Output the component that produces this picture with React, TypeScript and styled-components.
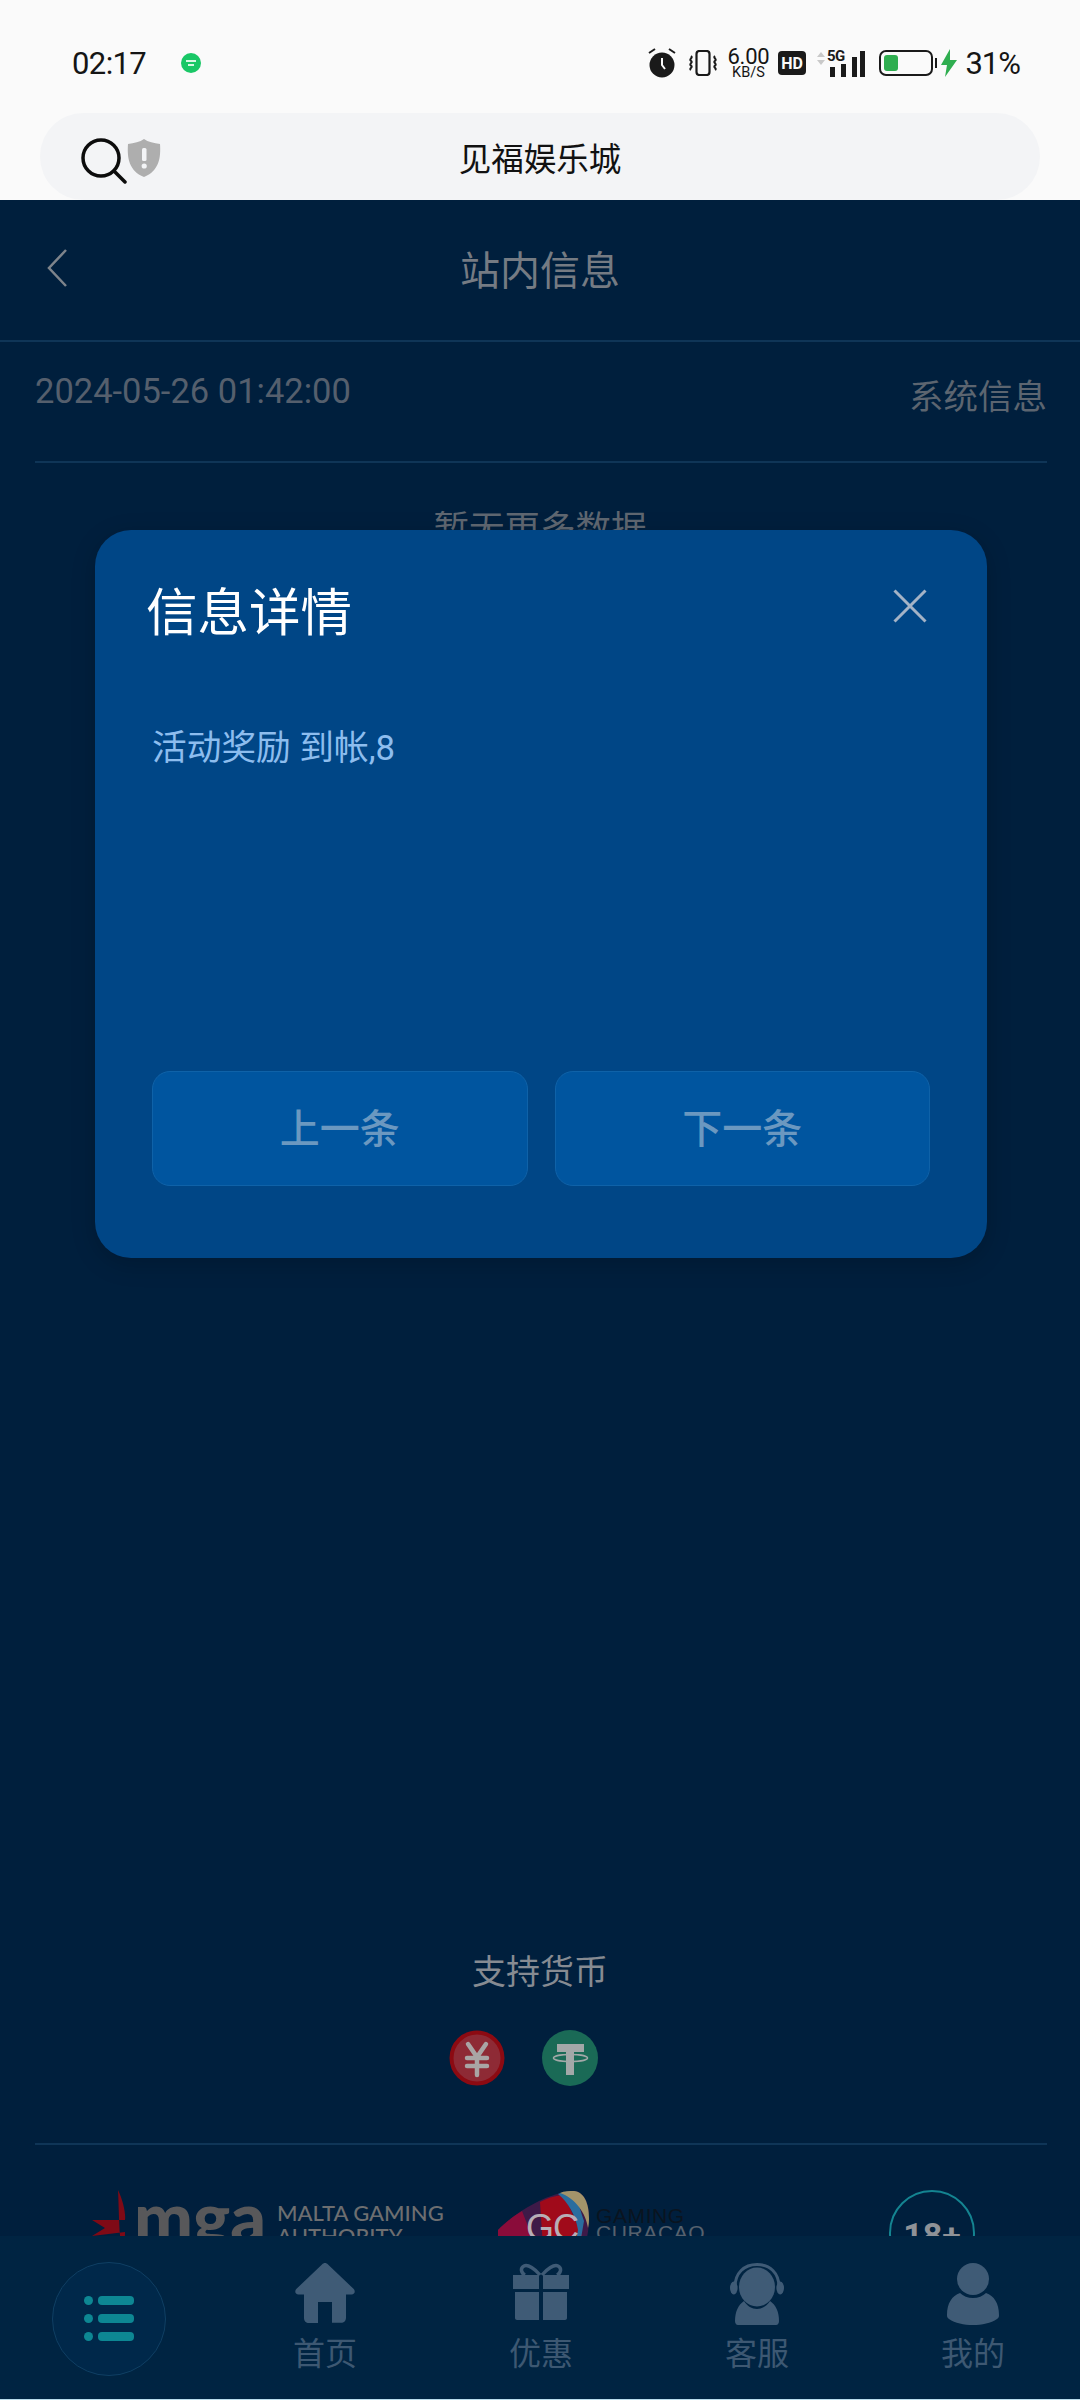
import React from "react";
import styled, { createGlobalStyle } from "styled-components";

const Global = createGlobalStyle`
  html, body { margin: 0; padding: 0; background: #001f3d; }
  * { box-sizing: border-box; }
`;

const SANS = `Roboto, "Noto Sans CJK SC", "Noto Sans", sans-serif`;

const Screen = styled.div`
  width: 1080px;
  height: 2400px;
  display: flex;
  flex-direction: column;
  overflow: hidden;
  font-family: ${SANS};
  background: #fafafa;
`;

const StatusBar = styled.div`
  height: 113px;
  flex: none;
  display: flex;
  align-items: center;
  padding: 13px 60px 0 72px;
  color: #151515;
`;
const Time = styled.span`
  font-size: 31px;
  letter-spacing: -0.6px;
  width: 108px;
`;
const NotifyDot = styled.span`
  width: 20px;
  height: 20px;
  margin-left: 1px;
  border-radius: 50%;
  background: #19c766;
  display: flex;
  flex-direction: column;
  align-items: center;
  justify-content: center;
  gap: 2px;
  &::before, &::after { content: ""; height: 2px; background: #d8f7e4; }
  &::before { width: 10px; }
  &::after { width: 6px; }
`;
const StatusRight = styled.div`
  margin-left: auto;
  display: flex;
  align-items: center;
`;
const Speed = styled.div`
  display: flex;
  flex-direction: column;
  align-items: center;
  width: 44px;
  margin: 0 8px 0 9px;
  line-height: 1;
`;
const SpeedValue = styled.span`
  font-size: 22px;
  line-height: 19px;
  letter-spacing: -0.2px;
`;
const SpeedUnit = styled.span`
  font-size: 14.5px;
  line-height: 13px;
`;
const Battery = styled.span`
  position: relative;
  width: 54px;
  height: 26px;
  margin: 0 8px 0 11px;
  border: 2px solid #1a1a1a;
  border-radius: 7px;
  padding: 3px;
  display: flex;
  &::after {
    content: "";
    position: absolute;
    right: -6px;
    top: 6px;
    width: 2px;
    height: 10px;
    background: #1a1a1a;
  }
`;
const BatteryFill = styled.span<{ $pct: number }>`
  width: ${(p) => p.$pct}%;
  background: #2fae50;
  border-radius: 3px;
`;
const Percent = styled.span`
  font-size: 31px;
  letter-spacing: -1px;
  margin-left: 8px;
`;

const UrlBar = styled.div`
  height: 87px;
  flex: none;
  margin: 0 40px;
  border-radius: 44px;
  background: #f3f4f6;
  position: relative;
  display: flex;
  align-items: center;
  justify-content: center;
`;
const UrlIcons = styled.div`
  position: absolute;
  left: 41px;
  top: 25px;
  display: flex;
  align-items: flex-start;
`;
const UrlTitle = styled.span`
  font-size: 32.500px;
  color: #111;
`;

const Main = styled.main`
  flex: 1;
  min-height: 0;
  position: relative;
  overflow: hidden;
  display: flex;
  flex-direction: column;
  background: #001f3d;
`;
const Header = styled.header`
  height: 142px;
  flex: none;
  border-bottom: 2px solid #0f3557;
  display: flex;
  align-items: center;
  justify-content: center;
  position: relative;
`;
const BackIcon = styled.svg`
  position: absolute;
  left: 46px;
  top: 48px;
`;
const PageTitle = styled.h1`
  margin: 0 0 4px;
  font-size: 40px;
  font-weight: 400;
  color: #757b83;
`;
const MessageRow = styled.div`
  height: 121px;
  flex: none;
  margin: 0 33px 0 35px;
  border-bottom: 2px solid #0f3557;
  display: flex;
  justify-content: space-between;
  align-items: flex-start;
  padding-top: 29px;
`;
const DateText = styled.span`
  font-size: 34.5px;
  line-height: 40px;
  color: #555f6d;
`;
const TypeText = styled.span`
  font-size: 34.5px;
  line-height: 44px;
  margin-top: 4px;
  color: #5c6570;
`;
const EmptyText = styled.div`
  flex: 1;
  padding-top: 46px;
  text-align: center;
  font-size: 35.5px;
  line-height: 40px;
  color: #5f6771;
`;
const CurrencySection = styled.section`
  flex: none;
  height: 196px;
  display: flex;
  flex-direction: column;
  align-items: center;
`;
const CurrencyTitle = styled.div`
  margin-top: 3px;
  font-size: 34px;
  line-height: 44px;
  color: #868b92;
`;
const CurrencyIcons = styled.div`
  margin-top: 36px;
  padding-right: 33px;
  display: flex;
  gap: 37px;
`;
const LogoRow = styled.div`
  height: 93px;
  flex: none;
  margin: 0 33px 0 35px;
  padding: 45px 0 0 57px;
  border-top: 2px solid #0f3557;
  display: grid;
  grid-template-columns: 406px 391px 86px;
  overflow: hidden;
`;
const MgaLogo = styled.div`
  display: flex;
  align-items: flex-start;
  height: 100px;
`;
const MgaWord = styled.span`
  font-family: Lato, sans-serif;
  font-weight: 900;
  font-size: 70px;
  line-height: 46px;
  letter-spacing: 0;
  margin: 3px 0 0 6px;
  color: #58585a;
`;
const MgaCaption = styled.span`
  margin: 11px 0 0 11px;
  font-family: Lato, sans-serif;
  font-weight: 500;
  font-size: 22px;
  line-height: 23px;
  color: #6d6e70;
  white-space: nowrap;
`;
const GcLogo = styled.div`
  display: flex;
  align-items: flex-start;
  height: 100px;
  position: relative;
`;
const GcMark = styled.span`
  position: absolute;
  left: 28px;
  top: 18px;
  font-family: "Liberation Sans", sans-serif;
  font-size: 36px;
  line-height: 40px;
  letter-spacing: -1px;
  color: #b7aeb6;
`;
const GcCaption = styled.div`
  margin: 17px 0 0 6px;
  display: flex;
  flex-direction: column;
  font-family: "Liberation Sans", sans-serif;
  white-space: nowrap;
`;
const GcLine = styled.span<{ $color: string }>`
  font-size: 21px;
  line-height: 17px;
  letter-spacing: 0.6px;
  color: ${(p) => p.$color};
`;
const AgeBadge = styled.div`
  width: 86px;
  height: 86px;
  flex: none;
  border: 2px solid #148491;
  border-radius: 50%;
  display: flex;
  justify-content: center;
  padding-top: 23px;
  font-size: 34px;
  line-height: 40px;
  font-weight: 700;
  color: #8f9297;
`;

const Overlay = styled.div`
  position: absolute;
  inset: 0;
  display: flex;
  justify-content: center;
  align-items: flex-start;
  padding: 330px 0 0 2px;
`;
const Modal = styled.div`
  width: 892px;
  height: 728px;
  padding: 0 57px 72px;
  border-radius: 36px;
  background: #004686;
  box-shadow: 0 6px 24px rgba(0, 0, 0, 0.18);
  display: flex;
  flex-direction: column;
`;
const ModalHead = styled.div`
  height: 120px;
  flex: none;
  margin: 0 3px 0 -6px;
  display: flex;
  align-items: flex-end;
  justify-content: space-between;
`;
const ModalTitle = styled.h2`
  margin: 0;
  font-size: 51.5px;
  line-height: 72px;
  font-weight: 400;
  color: #ffffff;
`;
const CloseIcon = styled.svg`
  align-self: flex-start;
  margin-top: 59px;
`;
const ModalBody = styled.p`
  margin: 75px 0 0;
  font-size: 34.7px;
  line-height: 46px;
  color: #8dbdee;
`;
const ModalActions = styled.div`
  margin-top: auto;
  display: flex;
  gap: 27px;
`;
const PageButton = styled.button`
  flex: 1;
  height: 115px;
  padding: 0 0 5px;
  border: 1px solid #0f62a8;
  border-radius: 18px;
  background: #00559f;
  color: #6b98c0;
  font-family: ${SANS};
  font-size: 40px;
  font-weight: 500;
`;

const Nav = styled.nav`
  height: 164px;
  flex: none;
  background: #002442;
  border-bottom: 1px solid #b9dcec;
  display: grid;
  grid-template-columns: 217px repeat(4, 216px);
`;
const MenuSlot = styled.div`
  display: flex;
  justify-content: center;
  padding-top: 26px;
`;
const MenuButton = styled.div`
  width: 114px;
  height: 114px;
  border: 1.5px solid #0f3f63;
  border-radius: 50%;
  background: #00284a;
  display: flex;
  align-items: center;
  justify-content: center;
`;
const NavItem = styled.div`
  display: flex;
  flex-direction: column;
  align-items: center;
  padding-top: 27px;
`;
const NavIconBox = styled.div`
  height: 62px;
  display: flex;
  align-items: flex-start;
  justify-content: center;
`;
const NavLabel = styled.span`
  margin-top: 9px;
  font-size: 32px;
  line-height: 40px;
  color: #3d5872;
`;

const NAV = "#3f5b76";
const TEAL = "#0d8793";

function HomeIcon() {
  return (
    <svg width="60" height="60" viewBox="0 0 60 60">
      <path
        fill={NAV}
        d="M30 0c1.2 0 2 .5 3 1.5l25.5 24.3c2.3 2.2 1.2 5.7-2 5.7H51v23.3c0 3-2 5-5 5H37V39H23v21h-9c-3 0-5-2-5-5V31.500H3.500c-3.200 0-4.300-3.500-2-5.700L27 1.500C28 .5 28.800 0 30 0z"
      />
    </svg>
  );
}
function GiftIcon() {
  return (
    <svg width="58" height="58" viewBox="0 0 58 58">
      <path fill="none" stroke={NAV} strokeWidth="3.5" d="M28 12C23 6 16 1 12 3c-4 2-3 7 1 9M30 12c5-6 12-11 16-9 4 2 3 7-1 9" />
      <path fill={NAV} d="M1 12h26v14H1zM31 12h26v14H31zM3 29h24v28H5c-1 0-2-1-2-2zM31 29h24v26c0 1-1 2-2 2H31z" />
    </svg>
  );
}
function HeadsetIcon() {
  return (
    <svg width="54" height="62" viewBox="0 0 54 62">
      <path fill="none" stroke={NAV} strokeWidth="3" d="M5 24C5 10 14 1.500 27 1.500S49 10 49 24" />
      <ellipse cx="3.800" cy="25" rx="3.800" ry="6.500" fill={NAV} />
      <ellipse cx="50.200" cy="25" rx="3.800" ry="6.500" fill={NAV} />
      <ellipse cx="27" cy="24" rx="18" ry="19.500" fill={NAV} />
      <path fill={NAV} d="M14 38c3 5 8 8 13 8s10-3 13-8c6 4 9 11 9 20 0 2-1 4-3 4H8c-2 0-3-2-3-4 0-9 3-16 9-20z" />
    </svg>
  );
}
function UserIcon() {
  return (
    <svg width="52" height="62" viewBox="0 0 52 62">
      <circle cx="26" cy="16" r="16" fill={NAV} />
      <path fill={NAV} d="M13 30c3 3 8 5 13 5s10-2 13-5c8 3 13 10 13 22 0 1 0 3-2 4-6 4-15 6-24 6S8 60 2 56c-2-1-2-3-2-4 0-12 5-19 13-22z" />
    </svg>
  );
}

export default function App() {
  return (
    <Screen>
      <Global />
      <StatusBar>
        <Time>02:17</Time>
        <NotifyDot />
        <StatusRight>
          <svg width="28" height="30" viewBox="0 0 28 30">
            <circle cx="14" cy="17" r="12.500" fill="#1a1a1a" />
            <path d="M1 5l6-4M27 5l-6-4" stroke="#1a1a1a" strokeWidth="2" />
            <path d="M14 10v7l3 4" stroke="#fafafa" strokeWidth="2" fill="none" />
          </svg>
          <svg width="28" height="26" viewBox="0 0 28 26" style={{ marginLeft: 13 }}>
            <rect x="7.500" y="1" width="13" height="24" rx="3" fill="none" stroke="#1a1a1a" strokeWidth="2.200" />
            <path d="M2 6c2.500 1.600-2.500 3.200 0 4.800s-2.500 3.200 0 4.800 -2.500 3 0 4.400M26 6c-2.500 1.600 2.500 3.200 0 4.800s2.500 3.200 0 4.800 2.500 3 0 4.400" stroke="#1a1a1a" strokeWidth="2" fill="none" />
          </svg>
          <Speed>
            <SpeedValue>6.00</SpeedValue>
            <SpeedUnit>KB/S</SpeedUnit>
          </Speed>
          <svg width="28" height="24" viewBox="0 0 28 24">
            <rect width="28" height="24" rx="4" fill="#1a1a1a" />
            <text x="14" y="18" textAnchor="middle" fontFamily="Roboto, sans-serif" fontWeight="700" fontSize="16" fill="#fafafa">HD</text>
          </svg>
          <svg width="52" height="30" viewBox="0 0 52 30" style={{ marginLeft: 10 }}>
            <path d="M1 9l4-5 4 5zM1 12l4 5 4-5z" fill="#c9c9c9" />
            <text x="11" y="13" fontFamily="Roboto, sans-serif" fontWeight="700" fontSize="15" fill="#1a1a1a" letterSpacing="-0.5">5G</text>
            <path d="M16 19h5v10h-5zM27 16h5v13h-5zM38 9h5v20h-5zM46 3h5v26h-5z" fill="#1a1a1a" transform="translate(-2 0)" />
          </svg>
          <Battery>
            <BatteryFill $pct={31} />
          </Battery>
          <svg width="16" height="28" viewBox="0 0 16 28">
            <path d="M9 0L0 16h6l-2 12 12-17H9z" fill="#2fae50" />
          </svg>
          <Percent>31%</Percent>
        </StatusRight>
      </StatusBar>

      <UrlBar>
        <UrlIcons>
          <svg width="46" height="46" viewBox="0 0 46 46">
            <circle cx="20" cy="20" r="18" fill="none" stroke="#0c0c0c" strokeWidth="3.500" />
            <path d="M33 33l11 11" stroke="#0c0c0c" strokeWidth="3.500" strokeLinecap="round" />
          </svg>
          <svg width="34" height="38" viewBox="0 0 34 38" style={{ marginTop: 1 }}>
            <path d="M17 0c4 3 10 4 16 5 1 14-1 27-16 33C2 32 0 19 1 5c6-1 12-2 16-5z" fill="#aeaeae" />
            <rect x="15" y="9" width="4.500" height="13" rx="1.500" fill="#f3f4f6" />
            <circle cx="17.200" cy="27" r="2.600" fill="#f3f4f6" />
          </svg>
        </UrlIcons>
        <UrlTitle>见福娱乐城</UrlTitle>
      </UrlBar>

      <Main>
        <Header>
          <BackIcon width="22" height="40" viewBox="0 0 22 40">
            <path d="M20 2L3 20l17 18" fill="none" stroke="#7e848b" strokeWidth="2.500" />
          </BackIcon>
          <PageTitle>站内信息</PageTitle>
        </Header>
        <MessageRow>
          <DateText>2024-05-26 01:42:00</DateText>
          <TypeText>系统信息</TypeText>
        </MessageRow>
        <EmptyText>暂无更多数据</EmptyText>
        <CurrencySection>
          <CurrencyTitle>支持货币</CurrencyTitle>
          <CurrencyIcons>
            <svg width="56" height="56" viewBox="0 0 56 56">
              <circle cx="28" cy="28" r="25.500" fill="#8e2a35" stroke="#8c0a12" strokeWidth="4" />
              <path d="M19 14l9 13 9-13M18 28h20M18 36h20M28 27v18" fill="none" stroke="#a9a5a5" strokeWidth="4.500" strokeLinecap="round" />
            </svg>
            <svg width="56" height="56" viewBox="0 0 56 56">
              <circle cx="28" cy="28" r="28" fill="#1a6a56" />
              <path d="M15 14h27v8H32v23h-8V22H15z" fill="#a3a8a8" />
              <ellipse cx="28.500" cy="28" rx="17" ry="3.500" fill="none" stroke="#a3a8a8" strokeWidth="1.500" />
            </svg>
          </CurrencyIcons>
        </CurrencySection>
        <LogoRow>
          <MgaLogo>
            <svg width="36" height="60" viewBox="0 0 36 60">
              <path d="M26 0c5 10 8 24 7 30H0l13 8-13 8 33-4c0 8-1 14-3 18-3-12-3-40-4-60z" fill="#7f0a16" />
            </svg>
            <MgaWord>mga</MgaWord>
            <MgaCaption>
              MALTA GAMING
              <br />
              AUTHORITY
            </MgaCaption>
          </MgaLogo>
          <GcLogo>
            <svg width="92" height="72" viewBox="0 0 92 72">
              <path d="M0 40C18 22 48 3 76 1c10 1 15 12 15 27 0 16-4 32-12 44H10C2 60 -2 48 0 40z" fill="#3e1a48" />
              <path d="M0 40C6 34 14 27 24 21l20 51H10C2 60 -2 48 0 40z" fill="#8a0c3a" />
              <path d="M42 12C52 7 60 5 66 5l18 40-5 27H46z" fill="#a00a1a" />
              <path d="M60 4c5-2 12-3 16-3 2 4 4 12 10 30l-7 41H74L80 40C78 26 70 12 60 4z" fill="#2a6d9e" />
              <path d="M62 3c4-2 10-2 14-2 10 1 15 12 15 27 0 2 0 6-1 10-2-15-13-30-28-35z" fill="#a3946a" />
            </svg>
            <GcMark>GC</GcMark>
            <GcCaption>
              <GcLine $color="#0a1420">GAMING</GcLine>
              <GcLine $color="#56616d">CURACAO</GcLine>
            </GcCaption>
          </GcLogo>
          <AgeBadge>18+</AgeBadge>
        </LogoRow>

        <Overlay>
          <Modal>
            <ModalHead>
              <ModalTitle>信息详情</ModalTitle>
              <CloseIcon width="34" height="34" viewBox="0 0 34 34">
                <path d="M1.500 1.500l31 31M32.500 1.500l-31 31" stroke="#a4b3c6" strokeWidth="3" />
              </CloseIcon>
            </ModalHead>
            <ModalBody>活动奖励 到帐,8</ModalBody>
            <ModalActions>
              <PageButton>上一条</PageButton>
              <PageButton>下一条</PageButton>
            </ModalActions>
          </Modal>
        </Overlay>
      </Main>

      <Nav>
        <MenuSlot>
          <MenuButton>
            <svg width="50" height="46" viewBox="0 0 50 46">
              <rect x="0" y="0" width="9" height="9" rx="4.500" fill={TEAL} />
              <rect x="14" y="0" width="36" height="9" rx="4" fill={TEAL} />
              <rect x="0" y="18" width="9" height="9" rx="4.500" fill={TEAL} />
              <rect x="14" y="18" width="36" height="9" rx="4" fill={TEAL} />
              <rect x="0" y="36" width="9" height="9" rx="4.500" fill={TEAL} />
              <rect x="14" y="36" width="36" height="9" rx="4" fill={TEAL} />
            </svg>
          </MenuButton>
        </MenuSlot>
        <NavItem>
          <NavIconBox><HomeIcon /></NavIconBox>
          <NavLabel>首页</NavLabel>
        </NavItem>
        <NavItem>
          <NavIconBox><GiftIcon /></NavIconBox>
          <NavLabel>优惠</NavLabel>
        </NavItem>
        <NavItem>
          <NavIconBox><HeadsetIcon /></NavIconBox>
          <NavLabel>客服</NavLabel>
        </NavItem>
        <NavItem>
          <NavIconBox><UserIcon /></NavIconBox>
          <NavLabel>我的</NavLabel>
        </NavItem>
      </Nav>
    </Screen>
  );
}
